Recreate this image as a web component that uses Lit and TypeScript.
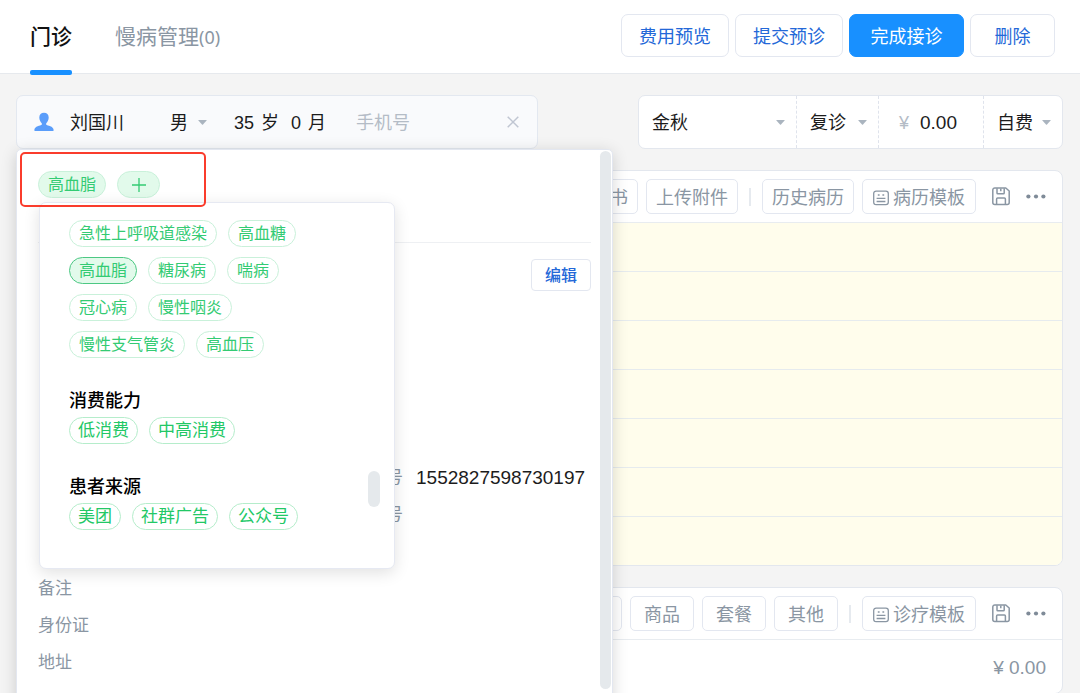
import { LitElement, html, css, svg } from "lit";
import { customElement, property } from "lit/decorators.js";
import { classMap } from "lit/directives/class-map.js";

const base = css`
  * {
    box-sizing: border-box;
  }
  button,
  input,
  select {
    font: inherit;
    color: inherit;
    margin: 0;
    padding: 0;
    border: 0;
    background: none;
    outline: none;
    min-width: 0;
  }
  input,
  select {
    padding-top: 2px;
  }
  button {
    cursor: pointer;
    white-space: nowrap;
  }
  select {
    appearance: none;
  }
  svg {
    display: block;
    flex: none;
  }
`;

const caret = html`<svg class="caret" width="9" height="5" viewBox="0 0 9 5" aria-hidden="true">
  <path d="M0.6 0h7.8q.6 0 .2.5L5 4.6q-.5.5-1 0L.4.5Q0 0 .6 0z" fill="#aab4bf" />
</svg>`;

const saveIcon = html`<svg width="18" height="19" viewBox="0 0 18 19" fill="none" stroke="#8a96a3" stroke-width="1.5" aria-hidden="true">
  ${svg`<path d="M2.8 1h11l3.4 3v11.6a2 2 0 0 1-2 2H2.8a2 2 0 0 1-2-2V3a2 2 0 0 1 2-2z" stroke-linejoin="round"/>
  <path d="M5 1.2v4.8q0 .8.8.8h5.6q.8 0 .8-.8V1.2M8.800 1.400v2.800"/>
  <path d="M4.6 17.4v-5.4q0-1 1-1h6.8q1 0 1 1v5.400"/>`}
</svg>`;

const templateIcon = html`<svg width="16" height="16" viewBox="0 0 16 16" fill="none" stroke="#8a96a3" stroke-width="1.3" aria-hidden="true">
  ${svg`<rect x=".7" y="1.1" width="14.6" height="13.6" rx="2.4"/>
  <path d="M3.6 8.400h8.800M3.6 11.500h8.800"/>
  <path d="M4.800 5h1.800M9.400 5h1.800" stroke-width="1.700"/>`}
</svg>`;

const dotsIcon = html`<svg width="20" height="19" viewBox="0 0 20 19" fill="#7f8b98" aria-hidden="true">
  ${svg`<circle cx="2.4" cy="9.5" r="2.1"/><circle cx="10" cy="9.5" r="2.1"/><circle cx="17.4" cy="9.5" r="2.1"/>`}
</svg>`;

@customElement("page-header")
class PageHeader extends LitElement {
  static styles = [
    base,
    css`
      :host {
        display: block;
      }
      .bar {
        display: flex;
        justify-content: space-between;
        height: 74px;
        padding: 0 25px 0 30px;
        background: #fff;
        border-bottom: 1px solid #e6e9ed;
      }
      .tabs {
        display: flex;
        gap: 43px;
        font-size: 21px;
      }
      .tab {
        position: relative;
        display: flex;
        align-items: center;
        color: #8a96a3;
      }
      .tab.current {
        color: #111;
        font-weight: 500;
      }
      .tab.current::after {
        content: "";
        position: absolute;
        left: 0;
        right: 0;
        bottom: -2px;
        height: 5px;
        border-radius: 2px;
        background: #1890ff;
      }
      .count {
        font-family: "Noto Sans", sans-serif;
        font-size: 18px;
      }
      .actions {
        display: flex;
        align-items: flex-start;
        gap: 6px;
        padding-top: 14px;
      }
      .action {
        height: 43px;
        min-width: 85px;
        padding: 2px 17px 0;
        border: 1px solid #e3e7f0;
        border-radius: 7px;
        background: #fff;
        color: #2468d8;
      }
      .primary {
        min-width: 115px;
        border-color: #1890ff;
        background: #1890ff;
        color: #fff;
      }
    `,
  ];
  render() {
    return html`<header class="bar">
      <nav class="tabs">
        <button class="tab current">门诊</button>
        <button class="tab">慢病管理<span class="count">(0)</span></button>
      </nav>
      <div class="actions">
        <button class="action">费用预览</button>
        <button class="action">提交预诊</button>
        <button class="action primary">完成接诊</button>
        <button class="action">删除</button>
      </div>
    </header>`;
  }
}

@customElement("patient-bar")
class PatientBar extends LitElement {
  static styles = [
    base,
    css`
      :host {
        display: block;
      }
      .card {
        display: flex;
        align-items: center;
        height: 54px;
        padding: 0 18px 0 17px;
        border: 1px solid #e3e8f0;
        border-radius: 7px;
        background: #f9fafc;
        color: #1c1c1c;
      }
      .name {
        width: 84px;
        margin: 0 16px;
      }
      .gender {
        display: grid;
        align-items: center;
        width: 37px;
        margin-right: 27px;
      }
      .gender > * {
        grid-area: 1 / 1;
      }
      .caret {
        justify-self: end;
        pointer-events: none;
      }
      .age {
        display: flex;
        align-items: baseline;
        gap: 5px;
        margin-right: 12px;
      }
      .years {
        width: 22px;
      }
      .months {
        width: 12px;
      }
      .phone {
        flex: 1;
        margin-left: 18px;
      }
      .phone::placeholder {
        color: #b4bcc6;
        opacity: 1;
      }
    `,
  ];
  render() {
    return html`<div class="card">
      <svg width="20" height="20" viewBox="0 0 20 20" fill="#5a9dfa" aria-hidden="true">
        <path d="M10 .8c2.900 0 4.700 2 4.700 4.800 0 2.400-1.200 4.600-2.500 5.700v1.500c1.200.9 7.300 1.200 7.500 5.400 0 .5-.3.8-.8.800H1.100c-.5 0-.8-.3-.8-.8.2-4.200 6.300-4.500 7.500-5.400v-1.500C6.500 10.200 5.300 8 5.300 5.600 5.300 2.800 7.100.8 10 .8z" />
      </svg>
      <input class="name" aria-label="姓名" .value=${"刘国川"} />
      <div class="gender">
        <select aria-label="性别"><option>男</option><option>女</option></select>
        ${caret}
      </div>
      <label class="age"><input class="years" .value=${"35"} />岁</label>
      <label class="age"><input class="months" .value=${"0"} />月</label>
      <input class="phone" aria-label="手机号" placeholder="手机号" />
      <button aria-label="清除">
        <svg width="12" height="12" viewBox="0 0 12 12" fill="none" stroke="#c0c6d2" stroke-width="1.5">
          <path d="M.7.7l10.600 10.600M11.300.7L.7 11.300" />
        </svg>
      </button>
    </div>`;
  }
}

@customElement("visit-bar")
class VisitBar extends LitElement {
  static styles = [
    base,
    css`
      :host {
        display: block;
      }
      .card {
        display: grid;
        grid-template-columns: 158fr 82fr 105fr 78fr;
        height: 54px;
        border: 1px solid #e3e7ee;
        border-radius: 7px;
        background: #fff;
        color: #1c1c1c;
      }
      .cell {
        display: grid;
        align-items: center;
        padding: 0 11px 0 13px;
        border-right: 1px dashed #dfe3ec;
      }
      .cell > * {
        grid-area: 1 / 1;
      }
      .cell:last-child {
        border-right: 0;
      }
      .caret {
        justify-self: end;
        pointer-events: none;
      }
      .fee {
        display: flex;
        gap: 11px;
        padding: 0 0 0 20px;
      }
      .sign {
        padding-top: 2px;
        color: #b4bcc6;
      }
      .amount {
        width: 50px;
        font-size: 19px;
      }
    `,
  ];
  render() {
    return html`<div class="card">
      <div class="cell"><select aria-label="医生"><option>金秋</option></select>${caret}</div>
      <div class="cell"><select aria-label="类型"><option>复诊</option><option>初诊</option></select>${caret}</div>
      <label class="cell fee"><span class="sign">¥</span><input class="amount" .value=${"0.00"} /></label>
      <div class="cell"><select aria-label="费别"><option>自费</option></select>${caret}</div>
    </div>`;
  }
}

@customElement("record-card")
class RecordCard extends LitElement {
  @property({ attribute: false }) left: string[] = [];
  @property({ attribute: false }) right: string[] = [];
  @property() template = "";
  static styles = [
    base,
    css`
      :host {
        display: block;
        border: 1px solid #e3e7ee;
        border-radius: 8px;
        background: #fff;
        overflow: hidden;
      }
      .toolbar {
        display: flex;
        align-items: center;
        justify-content: flex-end;
        gap: 8px;
        height: 52px;
        padding-right: 16px;
        border-bottom: 1px solid #e8ecf0;
        color: #8a96a3;
      }
      .tool {
        display: flex;
        align-items: center;
        justify-content: center;
        gap: 4px;
        height: 35px;
        padding: 2px 9px 0;
        border: 1px solid #e3e7f0;
        border-radius: 5px;
      }
      .tool.short {
        padding: 2px 13px 0;
      }
      .tool.template {
        padding: 2px 10px 0;
      }
      .rule {
        width: 2px;
        height: 18px;
        margin: 0 3px;
        background: #e6eaef;
      }
      .save {
        margin: 0 8px;
      }
    `,
  ];
  render() {
    const tool = (t: string) => html`<button class=${classMap({ tool: true, short: t.length === 2 })}>${t}</button>`;
    return html`<div class="toolbar">
        ${this.left.map(tool)}
        <span class="rule"></span>
        ${this.right.map(tool)}
        <button class="tool template">${templateIcon}${this.template}</button>
        <button class="save" aria-label="保存">${saveIcon}</button>
        <button aria-label="更多">${dotsIcon}</button>
      </div>
      <slot></slot>`;
  }
}

type TagGroup = { title?: string; tags: string[][] };

const groups: TagGroup[] = [
  {
    tags: [
      ["急性上呼吸道感染", "高血糖"],
      ["高血脂", "糖尿病", "喘病"],
      ["冠心病", "慢性咽炎"],
      ["慢性支气管炎", "高血压"],
    ],
  },
  { title: "消费能力", tags: [["低消费", "中高消费"]] },
  { title: "患者来源", tags: [["美团", "社群广告", "公众号"]] },
];

const tagStyles = css`
  .tag {
    height: 27px;
    padding: 0 9px;
    border: 1px solid #c9f1da;
    border-radius: 14px;
    background: #fff;
    color: #33cb73;
    font-size: 16px;
    line-height: 25px;
  }
  .tag.filled {
    background: #e2faeb;
  }
`;

@customElement("tag-picker")
class TagPicker extends LitElement {
  @property() selected = "";
  static styles = [
    base,
    tagStyles,
    css`
      :host {
        display: flex;
        justify-content: space-between;
        padding: 17px 14px 38px 29px;
        border: 1px solid #e6e9f2;
        border-radius: 7px;
        background: #fff;
        box-shadow: 0 4px 16px rgba(0, 0, 0, 0.12);
      }
      .group + .group {
        margin-top: 31px;
      }
      .title {
        margin: 0 0 4px;
        color: #000;
        font-size: 18px;
        font-weight: 500;
        line-height: 24px;
      }
      .rows {
        display: grid;
        gap: 10px;
      }
      .row {
        display: flex;
        gap: 11px;
      }
      .tag.chosen {
        border-color: #4cc883;
        background: #e2faeb;
      }
      .titled .tag {
        padding: 0 8px;
        border-color: #b5edcb;
        color: #22c866;
        font-size: 17px;
      }
      .thumb {
        flex: none;
        width: 12px;
        height: 36px;
        margin-top: 251px;
        border-radius: 6px;
        background: #e5e9ec;
      }
    `,
  ];
  render() {
    return html`<div>
        ${groups.map(
          (g) => html`<section class=${classMap({ group: true, titled: !!g.title })}>
            ${g.title ? html`<h3 class="title">${g.title}</h3>` : null}
            <div class="rows">
              ${g.tags.map(
                (r) => html`<div class="row">
                  ${r.map((t) => html`<button class=${classMap({ tag: true, chosen: t === this.selected })}>${t}</button>`)}
                </div>`
              )}
            </div>
          </section>`
        )}
      </div>
      <div class="thumb"></div>`;
  }
}

@customElement("patient-panel")
class PatientPanel extends LitElement {
  static styles = [
    base,
    tagStyles,
    css`
      :host {
        display: flex;
        border: 1px solid #e3e7f0;
        border-radius: 5px;
        background: #fff;
        box-shadow: 0 3px 16px rgba(0, 0, 0, 0.16);
      }
      .body {
        position: relative;
        flex: 1;
        padding: 21px 9px 24px 21px;
      }
      .tags {
        display: flex;
        gap: 11px;
        padding-bottom: 44px;
        border-bottom: 1px solid #eef0f3;
      }
      .add {
        display: grid;
        place-items: center;
        width: 43px;
        padding: 0;
      }
      .edit {
        display: block;
        height: 32px;
        margin: 16px 0 168px auto;
        padding: 2px 13px 0;
        border: 1px solid #e3e7f0;
        border-radius: 4px;
        color: #2468d8;
        font-size: 16px;
        font-weight: 500;
      }
      .info {
        display: grid;
        grid-template-columns: 348px 1fr;
        grid-auto-rows: 37px;
        align-items: center;
        margin: 0;
        color: #8a96a3;
        font-size: 17px;
      }
      .pair {
        display: flex;
        align-items: center;
        gap: 13px;
      }
      .pair.second {
        grid-column: 2;
      }
      .pair.first {
        grid-column: 1;
      }
      .value {
        margin: 0;
        color: #1c1c1c;
        font-size: 19px;
      }
      .track {
        flex: none;
        width: 11px;
        margin: 1px 1px 16px 0;
        border-radius: 6px;
        background: #e5e9ec;
      }
      .picker {
        position: absolute;
        top: 52px;
        left: 22px;
        width: 356px;
      }
      .highlight {
        position: absolute;
        top: 2px;
        left: 3px;
        width: 186px;
        height: 55px;
        border: 2px solid #fa3c2c;
        border-radius: 5px;
        pointer-events: none;
      }
    `,
  ];
  render() {
    return html`<div class="body">
        <div class="tags">
          <button class="tag filled">高血脂</button>
          <button class="tag filled add" aria-label="添加标签">
            <svg width="14" height="14" viewBox="0 0 14 14" stroke="#33cb73" stroke-width="1.3"><path d="M7 0v14M0 7h14" /></svg>
          </button>
        </div>
        <button class="edit">编辑</button>
        <dl class="info">
          <div class="pair second"><dt>号</dt><dd class="value">1552827598730197</dd></div>
          <div class="pair second"><dt>号</dt></div>
          <div class="pair first"></div>
          <div class="pair first"><dt>备注</dt></div>
          <div class="pair first"><dt>身份证</dt></div>
          <div class="pair first"><dt>地址</dt></div>
        </dl>
        <tag-picker class="picker" selected="高血脂"></tag-picker>
        <div class="highlight"></div>
      </div>
      <div class="track"></div>`;
  }
}

@customElement("app-root")
class AppRoot extends LitElement {
  static styles = [
    base,
    css`
      :host {
        display: block;
        min-height: 100vh;
        max-height: 100vh;
        overflow: hidden;
        background: #f4f4f4;
        color: #1c1c1c;
        font-family: "Liberation Sans", "Noto Sans CJK SC", sans-serif;
        font-size: 18px;
        line-height: 28px;
      }
      .main {
        display: grid;
        gap: 21px;
        padding: 21px 17px 0 16px;
      }
      .top {
        display: grid;
        grid-template-columns: minmax(0, 522fr) minmax(0, 425fr);
        gap: 100px;
      }
      .patient {
        position: relative;
        z-index: 1;
      }
      .panel {
        position: absolute;
        top: 100%;
        left: 0;
        width: 597px;
      }
      .line {
        height: 49px;
        border-bottom: 1px solid #e6ebee;
        background: #fffdec;
      }
      .line:last-child {
        height: 48px;
        border-bottom: 0;
      }
      .total {
        padding: 14px 16px 11px;
        color: #8a96a3;
        font-size: 19px;
        text-align: right;
      }
    `,
  ];
  render() {
    return html`<page-header></page-header>
      <main class="main">
        <div class="top">
          <div class="patient">
            <patient-bar></patient-bar>
            <patient-panel class="panel"></patient-panel>
          </div>
          <visit-bar></visit-bar>
        </div>
        <record-card .left=${["书", "上传附件"]} .right=${["历史病历"]} template="病历模板">
          ${Array.from({ length: 7 }, () => html`<div class="line"></div>`)}
        </record-card>
        <record-card .left=${["", "商品", "套餐", "其他"]} .right=${[]} template="诊疗模板">
          <div class="total">¥ 0.00</div>
        </record-card>
      </main>`;
  }
}
